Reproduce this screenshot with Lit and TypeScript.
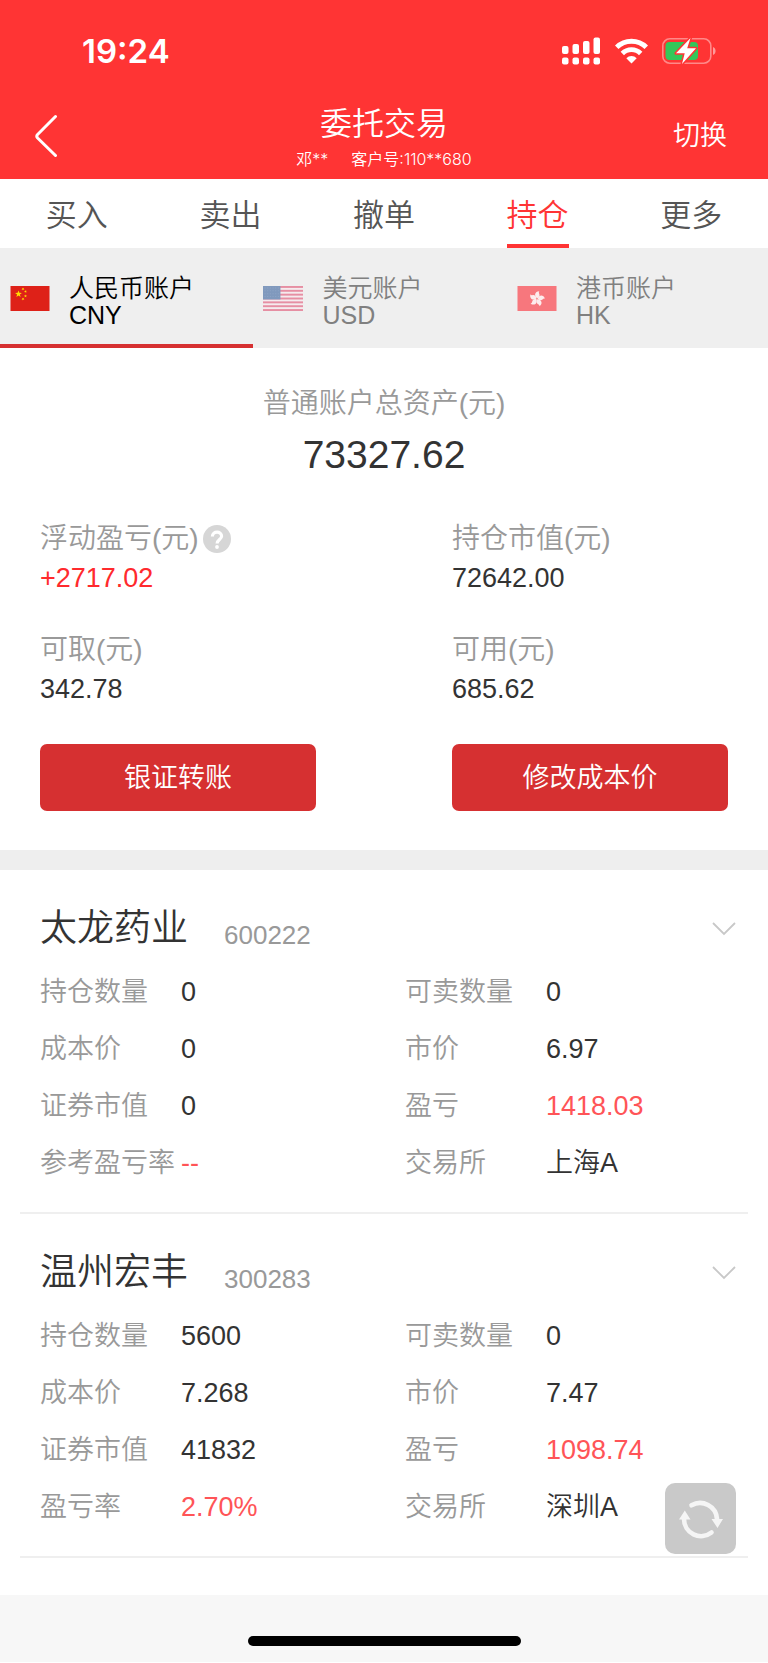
import { LitElement, html, css, svg, nothing } from "lit";
import { customElement, property, state } from "lit/decorators.js";
import { classMap } from "lit/directives/class-map.js";

interface Holding {
  name: string;
  code: string;
  fields: { label: string; value: string; up?: boolean }[];
}

const TABS = ["买入", "卖出", "撤单", "持仓", "更多"];

const ACCOUNTS = [
  { name: "人民币账户", code: "CNY" },
  { name: "美元账户", code: "USD" },
  { name: "港币账户", code: "HK" },
];

const HOLDINGS: Holding[] = [
  {
    name: "太龙药业",
    code: "600222",
    fields: [
      { label: "持仓数量", value: "0" },
      { label: "可卖数量", value: "0" },
      { label: "成本价", value: "0" },
      { label: "市价", value: "6.97" },
      { label: "证券市值", value: "0" },
      { label: "盈亏", value: "1418.03", up: true },
      { label: "参考盈亏率", value: "--", up: true },
      { label: "交易所", value: "上海A" },
    ],
  },
  {
    name: "温州宏丰",
    code: "300283",
    fields: [
      { label: "持仓数量", value: "5600" },
      { label: "可卖数量", value: "0" },
      { label: "成本价", value: "7.268" },
      { label: "市价", value: "7.47" },
      { label: "证券市值", value: "41832" },
      { label: "盈亏", value: "1098.74", up: true },
      { label: "盈亏率", value: "2.70%", up: true },
      { label: "交易所", value: "深圳A" },
    ],
  },
];

const star = (cx: number, cy: number, r: number, turn = -90) => {
  const pts = Array.from({ length: 10 }, (_, i) => {
    const a = ((turn + i * 36) * Math.PI) / 180;
    const d = i % 2 ? r * 0.4 : r;
    return `${(cx + d * Math.cos(a)).toFixed(2)},${(cy + d * Math.sin(a)).toFixed(2)}`;
  });
  return svg`<polygon points=${pts.join(" ")} fill="#ffde00"></polygon>`;
};

const flags: Record<string, unknown> = {
  CNY: html`<svg class="flag" viewBox="0 0 39 25" aria-hidden="true">
    <rect width="39" height="25" fill="#de2118"></rect>
    ${star(8, 8, 3.6)} ${star(12.5, 3, 1.6, 20)} ${star(15, 5.5, 1.6, 40)}
    ${star(15, 10, 1.6, -90)} ${star(12.5, 13, 1.6, -50)}
  </svg>`,
  USD: html`<svg class="flag" viewBox="0 0 39 26" preserveAspectRatio="none" aria-hidden="true">
    <rect width="39" height="26" fill="#f5ebee"></rect>
    ${[0, 4, 8, 12, 16, 20, 24].map((y) => svg`<rect y=${y} width="39" height="2" fill="#e68fa3"></rect>`)}
    <rect width="17" height="14" fill="#8099bd"></rect>
    ${[2, 5, 8, 11].map((y) => svg`<path d="M1.5 ${y}H16" stroke="#8ea5c5" stroke-width="1" stroke-dasharray="1 1.6"></path>`)}
  </svg>`,
  HK: html`<svg class="flag" viewBox="0 0 39 25" aria-hidden="true">
    <rect width="39" height="25" fill="#f7777d"></rect>
    ${[0, 72, 144, 216, 288].map(
      (a) => svg`<path transform="rotate(${a + 14} 19.5 12.8)" d="M19.5 12.2c-3.8-1.6-4.2-6 .4-7.4-1 2 1.800 2.800 1.200 5-.3 1-.8 1.700-1.600 2.400z" fill="#fdeced"></path>`,
    )}
  </svg>`,
};

@customElement("app-status-bar")
export class AppStatusBar extends LitElement {
  static styles = css`
    :host {
      display: flex;
      align-items: center;
      justify-content: space-between;
      height: 102px;
      padding: 0 52px 0 82px;
      box-sizing: border-box;
    }
    .time {
      font: 600 33px/40px Inter, "Liberation Sans", sans-serif;
    }
    .icons {
      display: flex;
      align-items: center;
      gap: 14px;
    }
    svg {
      display: block;
    }
  `;

  render() {
    return html`
      <span class="time">19:24</span>
      <span class="icons">
        <svg width="39" height="28" viewBox="0 0 39 28" fill="#fff" aria-label="信号">
          <rect x="0" y="9" width="6.500" height="8" rx="2"></rect>
          <rect x="10.500" y="7" width="6.500" height="10" rx="2"></rect>
          <rect x="21" y="4" width="6.500" height="13" rx="2"></rect>
          <rect x="31.500" y="0.500" width="6.500" height="16.500" rx="2"></rect>
          <rect x="0" y="20.500" width="6.500" height="7" rx="2"></rect>
          <rect x="10.500" y="20.500" width="6.500" height="7" rx="2"></rect>
          <rect x="21" y="20.500" width="6.500" height="7" rx="2"></rect>
          <rect x="31.500" y="20.500" width="6.500" height="7" rx="2"></rect>
        </svg>
        <svg width="33" height="26" viewBox="0 0 33 26" fill="none" stroke="#fff" stroke-width="5" aria-label="无线网络">
          <path d="M1.700 9.300a21 21 0 0 1 29.600 0"></path>
          <path d="M7.300 15.500a13 13 0 0 1 18.400 0" stroke-width="4.800"></path>
          <path d="M11.300 20.200a7.400 7.400 0 0 1 10.400 0L16.500 25.400z" fill="#fff" stroke="none"></path>
        </svg>
        <svg width="54" height="28" viewBox="0 0 54 28" aria-label="电池充电中">
          <rect x="0.800" y="1.800" width="48" height="24.400" rx="7" fill="none" stroke="#fff" stroke-opacity=".42" stroke-width="1.600"></rect>
          <path d="M51 10c3.400 1.200 3.400 6.800 0 8z" fill="#fff" fill-opacity=".5"></path>
          <rect x="3.500" y="5" width="32.500" height="18" rx="4" fill="#34c759"></rect>
          <path d="M28.500 1 14 16.300h8.700L20 27l14-15.700h-8.800z" fill="#fff" stroke="#ff3434" stroke-width="3" paint-order="stroke" stroke-linejoin="round"></path>
        </svg>
      </span>
    `;
  }
}

@customElement("holding-card")
export class HoldingCard extends LitElement {
  @property({ attribute: false }) holding!: Holding;

  static styles = css`
    :host {
      display: block;
      margin: 0 20px;
      padding: 27px 0 21px 20px;
      border-bottom: 2px solid #efefef;
    }
    .head {
      display: flex;
      align-items: center;
      height: 64px;
      padding-right: 12px;
    }
    .name {
      margin: 0;
      font-weight: inherit;
      font-size: 37px;
      line-height: 56px;
      color: #333;
    }
    .code {
      flex: 1;
      margin-left: 36px;
      padding-top: 12px;
      font-size: 26px;
      line-height: 36px;
      color: #999;
    }
    .toggle {
      padding: 0;
      border: 0;
      background: none;
    }
    .toggle svg {
      display: block;
    }
    .fields {
      display: grid;
      grid-template-columns: 365fr 343fr;
      margin: 2px 0 0;
    }
    .field {
      display: flex;
      align-items: center;
      height: 57px;
      line-height: 40px;
    }
    dt {
      width: 141px;
      font-size: 27px;
      white-space: nowrap;
      color: #999;
    }
    dd {
      margin: 0;
      font-size: 27px;
      color: #333;
    }
    .up {
      color: #ff5457;
    }
  `;

  render() {
    const { name, code, fields } = this.holding;
    return html`
      <div class="head">
        <h2 class="name">${name}</h2>
        <span class="code">${code}</span>
        <button class="toggle" aria-label="展开">
          <svg width="24" height="14" viewBox="0 0 24 14" fill="none" stroke="#c8c8c8" stroke-width="1.800">
            <path d="M1 1 12 12 23 1"></path>
          </svg>
        </button>
      </div>
      <dl class="fields">
        ${fields.map(
          (f) => html`<div class="field">
            <dt>${f.label}</dt>
            <dd class=${classMap({ up: !!f.up })}>${f.value}</dd>
          </div>`,
        )}
      </dl>
    `;
  }
}

@customElement("app-root")
export class AppRoot extends LitElement {
  @state() private tab = 3;
  @state() private account = 0;

  static styles = css`
    :host {
      display: block;
      background: #fff;
      color: #333;
      font-family: "Liberation Sans", "Noto Sans CJK SC", sans-serif;
      font-weight: 350;
    }
    button {
      margin: 0;
      padding: 0;
      border: 0;
      background: none;
      color: inherit;
      font: inherit;
      cursor: pointer;
    }
    svg {
      display: block;
    }
    .header {
      background: #ff3434;
      color: #fff;
    }
    .nav {
      display: grid;
      grid-template-columns: 1fr auto 1fr;
      height: 77px;
      padding: 0 34px;
    }
    .back {
      place-self: start;
      padding-top: 12px;
    }
    .switch {
      place-self: start end;
      padding: 14px 7px 0 0;
      font-size: 27px;
      line-height: 40px;
    }
    .heading {
      text-align: center;
    }
    .title {
      margin: 0;
      font-weight: inherit;
      font-size: 32px;
      line-height: 44px;
    }
    .client {
      display: flex;
      justify-content: center;
      gap: 23px;
      margin: 0;
      font-family: Inter, "Noto Sans CJK SC", sans-serif;
      font-size: 16px;
      line-height: 26px;
    }
    .tabs {
      display: grid;
      grid-template-columns: repeat(5, 1fr);
      justify-items: center;
      height: 69px;
    }
    .tab {
      border-bottom: 4px solid transparent;
      padding-top: 1px;
      font-size: 31px;
      color: #555;
    }
    .tab.active {
      color: #ff3434;
      border-color: #ff3434;
    }
    .accounts {
      display: flex;
      height: 100px;
      background: #efefef;
    }
    .account {
      display: flex;
      align-items: center;
      gap: 19px;
      width: 33%;
      padding: 7px 0 3px 10px;
      border-bottom: 4px solid transparent;
      text-align: left;
      font-size: 25px;
      line-height: 27px;
      color: #808080;
    }
    .account.active {
      border-color: #d63031;
      color: #000;
    }
    .account-text {
      display: grid;
      padding-top: 8px;
    }
    .flag {
      width: 40px;
      height: 25px;
    }
    .summary {
      padding: 36px 40px 39px;
    }
    .total {
      margin: 0;
      text-align: center;
    }
    .label {
      display: flex;
      align-items: center;
      gap: 4px;
      margin: 0;
      font-size: 28px;
      line-height: 40px;
      color: #999;
    }
    .total .label {
      justify-content: center;
    }
    .sum {
      margin: 0;
      font-size: 39px;
      line-height: 62px;
    }
    .stats {
      display: grid;
      grid-template-columns: 276fr 276fr;
      column-gap: 136px;
      row-gap: 32px;
      margin: 33px 0 0;
    }
    .value {
      margin: 0;
      font-size: 27px;
      line-height: 39px;
    }
    .gain {
      color: #ff2a2d;
    }
    .actions {
      display: grid;
      grid-template-columns: 276fr 276fr;
      column-gap: 136px;
      margin-top: 35px;
    }
    .action {
      height: 67px;
      border-radius: 7px;
      background: #d63031;
      color: #fff;
      font-size: 27px;
      line-height: 40px;
    }
    .holdings {
      border-top: 20px solid #eee;
      padding-bottom: 37px;
    }
    .refresh {
      position: fixed;
      right: 32px;
      bottom: 109px;
      width: 71px;
      height: 71px;
      border-radius: 10px;
      background: #c9c9c9;
    }
    .footer {
      display: flex;
      justify-content: center;
      padding: 41px 0 16px;
      background: #f7f7f7;
    }
    .home {
      width: 273px;
      height: 10px;
      border-radius: 5px;
      background: #000;
    }
  `;

  private stat(label: string, value: string, gain = false) {
    return html`<div>
      <dt class="label">
        ${label}${gain
          ? html`<button aria-label="说明">
              <svg width="28" height="28" viewBox="0 0 28 28">
                <circle cx="14" cy="14" r="14" fill="#d6d6d6"></circle>
                <path d="M9.400 11.500C9.400 5.700 18.700 5.900 18.600 11.200 18.500 14.400 14.100 14.600 14.100 18.500" fill="none" stroke="#fff" stroke-width="3.200"></path>
                <circle cx="14" cy="22" r="1.900" fill="#fff"></circle>
              </svg>
            </button>`
          : nothing}
      </dt>
      <dd class="value ${gain ? "gain" : ""}">${value}</dd>
    </div>`;
  }

  render() {
    return html`
      <header class="header">
        <app-status-bar></app-status-bar>
        <div class="nav">
          <button class="back" aria-label="返回">
            <svg width="24" height="44" viewBox="0 0 24 44" fill="none" stroke="#fff" stroke-width="3" stroke-linecap="round" stroke-linejoin="round">
              <path d="M21.500 2.500 3.600 20.500Q2 22.200 3.600 24L21.500 41.500"></path>
            </svg>
          </button>
          <div class="heading">
            <h1 class="title">委托交易</h1>
            <p class="client"><span>邓**</span><span>客户号:110**680</span></p>
          </div>
          <button class="switch">切换</button>
        </div>
      </header>
      <nav class="tabs">
        ${TABS.map(
          (t, i) => html`<button
            class=${classMap({ tab: true, active: i === this.tab })}
            @click=${() => (this.tab = i)}
          >${t}</button>`,
        )}
      </nav>
      <div class="accounts">
        ${ACCOUNTS.map(
          (a, i) => html`<button
            class=${classMap({ account: true, active: i === this.account })}
            @click=${() => (this.account = i)}
          >
            ${flags[a.code]}
            <span class="account-text"><span>${a.name}</span><span>${a.code}</span></span>
          </button>`,
        )}
      </div>
      <main>
        <section class="summary">
          <div class="total">
            <p class="label">普通账户总资产(元)</p>
            <p class="sum">73327.62</p>
          </div>
          <dl class="stats">
            ${this.stat("浮动盈亏(元)", "+2717.02", true)} ${this.stat("持仓市值(元)", "72642.00")}
            ${this.stat("可取(元)", "342.78")} ${this.stat("可用(元)", "685.62")}
          </dl>
          <div class="actions">
            <button class="action">银证转账</button>
            <button class="action">修改成本价</button>
          </div>
        </section>
        <section class="holdings">
          ${HOLDINGS.map((h) => html`<holding-card .holding=${h}></holding-card>`)}
        </section>
      </main>
      <footer class="footer"><div class="home"></div></footer>
      <button class="refresh" aria-label="刷新">
        <svg width="71" height="71" viewBox="0 0 71 71" fill="none" stroke="#f5f5f5" stroke-width="4.600" stroke-linecap="round">
          <path d="M26.500 22.300A17 17 0 0 1 52 36"></path>
          <path d="M46.500 49.500A17 17 0 0 1 19 36"></path>
          <path d="M46.500 36h11.500L52.500 45zM14 36.500H25.500L19.800 27.500z" fill="#f5f5f5" stroke="none"></path>
        </svg>
      </button>
    `;
  }
}
